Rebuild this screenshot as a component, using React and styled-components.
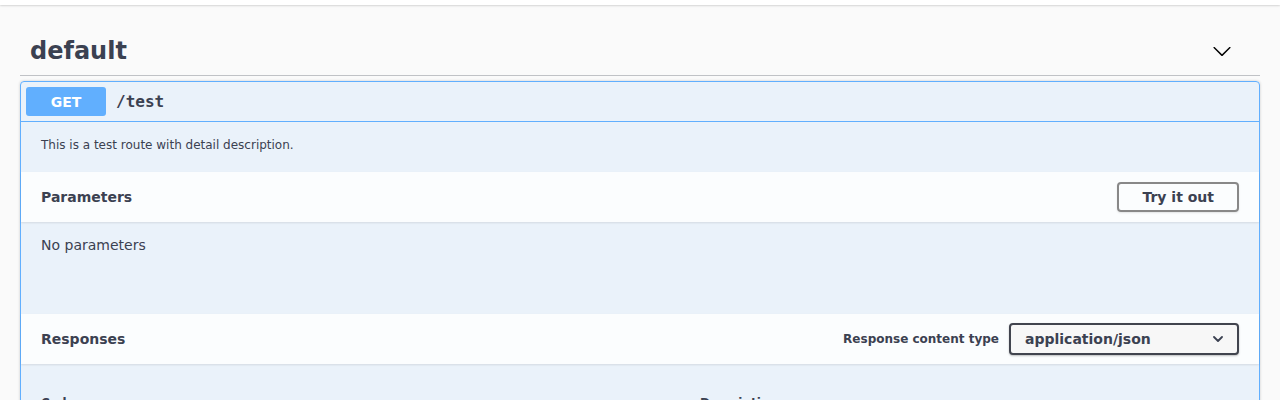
import React from "react";
import styled, { createGlobalStyle } from "styled-components";

const Global = createGlobalStyle`
  html, body { margin: 0; padding: 0; background: #fafafa; }
  body { font-family: "DejaVu Sans", sans-serif; color: #3b4151; overflow: hidden; }
  * { box-sizing: border-box; }
`;

const TopStrip = styled.div`
  height: 5px;
  background: #fff;
  box-shadow: 0 1px 2px 0 rgba(0, 0, 0, 0.15);
`;

const Wrapper = styled.div`
  padding: 0 20px;
  margin-top: 20px;
`;

const TagHeader = styled.div`
  display: flex;
  align-items: center;
  height: 51px;
  padding: 11px 20px 9px 10px;
  margin: 0 0 5px;
  border-bottom: 1px solid rgba(59, 65, 81, 0.3);
`;

const TagTitle = styled.h4`
  flex: 1;
  margin: 0;
  font-size: 24px;
  font-weight: 700;
  color: #3b4151;
`;

const ExpandButton = styled.button`
  border: none;
  background: none;
  padding: 0;
  margin-right: 8px;
  display: flex;
  align-items: center;
  color: #000;
`;

const Opblock = styled.div`
  border: 1px solid #61affe;
  background: rgba(97, 175, 254, 0.1);
  border-radius: 4px;
  box-shadow: 0 0 3px rgba(0, 0, 0, 0.19);
`;

const Summary = styled.div`
  display: flex;
  align-items: center;
  padding: 5px;
  border-bottom: 1px solid #61affe;
`;

const MethodBadge = styled.span`
  min-width: 80px;
  padding: 6px 15px;
  border-radius: 3px;
  background: #61affe;
  color: #fff;
  font-size: 14px;
  font-weight: 700;
  text-align: center;
  line-height: 16px;
  height: 29px;
  padding-top: 7px;
`;

const PathText = styled.span`
  padding: 0 10px;
  font-family: "DejaVu Sans Mono", monospace;
  font-size: 16px;
  font-weight: 700;
  color: #3b4151;
`;

const Description = styled.div`
  padding: 16px 20px 15px;
  margin: 0 0 4px;
  font-size: 12px;
  line-height: 15px;
  p { margin: 0; }
`;

const SectionHeader = styled.div`
  display: flex;
  align-items: center;
  min-height: 50px;
  padding: 8px 20px;
  background: rgba(255, 255, 255, 0.8);
  box-shadow: 0 1px 2px rgba(0, 0, 0, 0.1);
`;

const SectionTitle = styled.h4`
  flex: 1;
  margin: 0;
  font-size: 14px;
  font-weight: 700;
  color: #3b4151;
`;

const TryButton = styled.button`
  font-family: "DejaVu Sans", sans-serif;
  font-size: 14px;
  font-weight: 700;
  color: #3b4151;
  background: transparent;
  border: 2px solid #888;
  border-radius: 4px;
  padding: 5px 23px;
  line-height: 16px;
  height: 30px;
  box-shadow: 0 1px 2px rgba(0, 0, 0, 0.1);
`;

const ParamsBody = styled.div`
  height: 92px;
  padding: 15px 20px;
  font-size: 14px;
  line-height: 17px;
  p { margin: 0; }
`;

const ContentTypeLabel = styled.label`
  font-size: 12px;
  font-weight: 700;
  margin-right: 10px;
  color: #3b4151;
`;

const SelectBox = styled.div`
  display: flex;
  align-items: center;
  width: 230px;
  height: 32px;
  padding: 0 14px;
  border: 2px solid #41444e;
  border-radius: 4px;
  background: #f7f7f7;
  font-size: 14px;
  font-weight: 700;
  color: #3b4151;
  box-shadow: 0 1px 2px 0 rgba(0, 0, 0, 0.25);
`;

const SelectValue = styled.span`
  flex: 1;
`;

const ResponsesInner = styled.div`
  padding: 20px;
`;

const TableHead = styled.div`
  display: grid;
  grid-template-columns: 659px 1fr;
  font-size: 12px;
  font-weight: 700;
  padding: 12px 0;
`;

const Chevron = ({ size = 20 }) => (
  <svg width={size} height={size} viewBox="0 0 20 20" fill="currentColor">
    <path d="M17.418 6.109c.272-.268.709-.268.979 0s.271.701 0 .969l-7.908 7.83c-.27.268-.707.268-.979 0l-7.908-7.83c-.27-.268-.27-.701 0-.969.271-.268.709-.268.979 0L10 13.25l7.418-7.141z" />
  </svg>
);

const SmallChevron = () => (
  <svg width="10" height="6" viewBox="0 0 10 6" fill="none" stroke="#3b4151" strokeWidth="1.8" strokeLinecap="round" strokeLinejoin="round">
    <path d="M1 1l4 4 4-4" />
  </svg>
);

export default function App() {
  return (
    <>
      <Global />
      <TopStrip />
      <Wrapper>
        <TagHeader>
          <TagTitle>default</TagTitle>
          <ExpandButton aria-label="collapse">
            <Chevron />
          </ExpandButton>
        </TagHeader>
        <Opblock>
          <Summary>
            <MethodBadge>GET</MethodBadge>
            <PathText>/test</PathText>
          </Summary>
          <Description>
            <p>This is a test route with detail description.</p>
          </Description>
          <SectionHeader>
            <SectionTitle>Parameters</SectionTitle>
            <TryButton>Try it out</TryButton>
          </SectionHeader>
          <ParamsBody>
            <p>No parameters</p>
          </ParamsBody>
          <SectionHeader>
            <SectionTitle>Responses</SectionTitle>
            <ContentTypeLabel>Response content type</ContentTypeLabel>
            <SelectBox>
              <SelectValue>application/json</SelectValue>
              <SmallChevron />
            </SelectBox>
          </SectionHeader>
          <ResponsesInner>
            <TableHead>
              <span>Code</span>
              <span>Description</span>
            </TableHead>
          </ResponsesInner>
        </Opblock>
      </Wrapper>
    </>
  );
}
